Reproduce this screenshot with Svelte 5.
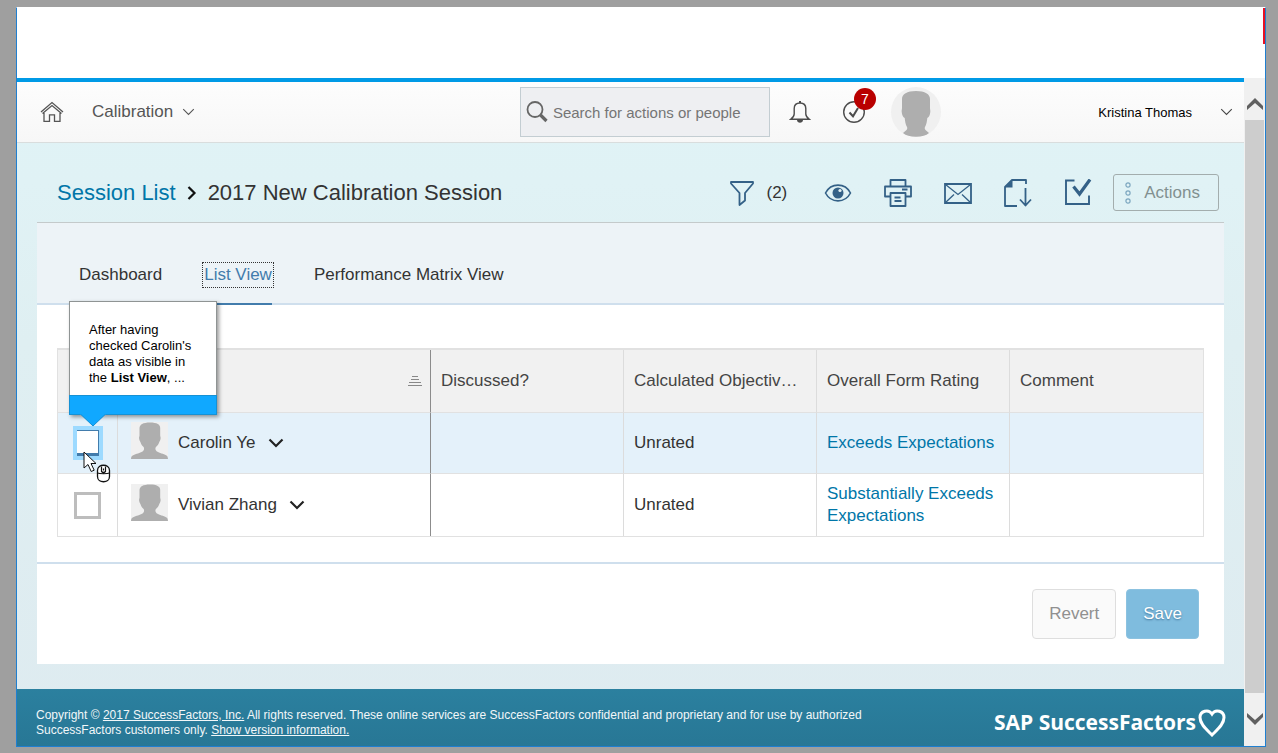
<script lang="ts">
  type Row = { id: string; name: string; objective: string; rating: string; active: boolean };

  const tabs = ["Dashboard", "List View", "Performance Matrix View"];
  let selectedTab = $state("List View");
  let search = $state("");

  const columns = ["Discussed?", "Calculated Objective Rating", "Overall Form Rating", "Comment"];

  const rows: Row[] = [
    { id: "carolin", name: "Carolin Ye", objective: "Unrated", rating: "Exceeds Expectations", active: true },
    { id: "vivian", name: "Vivian Zhang", objective: "Unrated", rating: "Substantially Exceeds Expectations", active: false },
  ];
</script>

{#snippet person()}
  <path
    d="M19 .5C12 .5 8.500 2.500 8.500 6.500v7c0 1-.6 1.500-.4 3 .3 2.500 1.200 3 1.500 4 .5 2 1.500 3 3 4.500.6.800.6 2 .2 3-.8 1.800-3.300 2.700-5.800 3.500-3.500 1-7 1.500-7 5.500h37c0-4-3-4.500-6.500-5.500-2.500-.8-5-1.700-5.800-3.500-.4-1-.4-2.200.2-3 1.500-1.500 2.700-2.500 3.200-4.500.3-1 1.200-1.500 1.500-4 .2-1.500-.4-2-.4-3v-7C29.500 2.500 26 .5 19 .5z"
    fill="#aeaeae"
  />
{/snippet}

{#snippet chevron(width: number, stroke: number)}
  <svg class="chevron" {width} height="10" viewBox="0 0 16 10" fill="none" stroke="currentColor" stroke-width={stroke}>
    <path d="M1.500 1.500 8 8l6.500-6.500" />
  </svg>
{/snippet}

<div class="window">
  <div class="blank"></div>
  <div class="body">
    <div class="page">
      <header>
        <nav class="left">
          <a class="home" href="#home" aria-label="Home">
            <svg width="24" height="22" viewBox="0 0 24 22" fill="none" stroke="#555" stroke-width="1.300">
              <path d="M1 11 12 1.500 23 11M2.500 12.500 12 4.500l9.500 8M4 12v8.300h5.500v-6.500h5v6.500H20V12" />
            </svg>
          </a>
          <button class="module">Calibration {@render chevron(13, 1.3)}</button>
        </nav>
        <div class="middle">
          <label class="search">
            <svg width="24" height="24" viewBox="0 0 24 24" fill="none" stroke="#666">
              <circle cx="10" cy="9.500" r="7.500" stroke-width="1.800" />
              <path d="m15.500 15 6 6" stroke-width="3.200" />
            </svg>
            <input type="text" aria-label="Search" placeholder="Search for actions or people" bind:value={search} />
          </label>
          <button class="bell" aria-label="Notifications">
            <svg width="22" height="24" viewBox="0 0 22 24" fill="none" stroke="#4c4c4c" stroke-width="1.400">
              <path d="M11 3C7.500 3 5.200 5.200 5.200 8.500V14c0 2-1.200 3.500-3.500 5.300h18.600c-2.300-1.800-3.500-3.300-3.500-5.300V8.500C16.800 5.200 14.500 3 11 3z" />
              <path d="M8 20c0 3.500 6 3.500 6 0zM10 1h2v2h-2z" fill="#4c4c4c" stroke="none" />
            </svg>
          </button>
          <button class="todo" aria-label="To-do">
            <svg width="24" height="24" viewBox="0 0 24 24" fill="none" stroke="#4c4c4c">
              <circle cx="12" cy="12" r="10.300" stroke-width="1.400" />
              <path d="m7.500 12.500 3.500 3.800 5-8.300" stroke-width="2" />
            </svg>
            <span class="badge">7</span>
          </button>
          <svg class="avatar" width="50" height="50" viewBox="0 0 50 50">
            <circle cx="25" cy="25" r="25" fill="#f0f0f0" />
            <path
              d="M25 4C16 4 11 7 11 12v9c0 1.500-.5 2-.3 4 .3 3.500 1.500 5 3 6 .3 3 .8 6.500 2.300 9 .5 1 .3 2-.5 3L12 46c3 2.500 7 3.800 13 3.800S35 48.500 38 46l-3.500-3c-.8-1-1-2-.5-3 1.500-2.500 2-6 2.300-9 1.500-1 2.700-2.500 3-6 .2-2-.3-2.500-.3-4v-9C39 7 34 4 25 4z"
              fill="#aeaeae"
            />
          </svg>
        </div>
        <button class="user">Kristina Thomas {@render chevron(13, 1.3)}</button>
      </header>

      <main>
        <div class="titlebar">
          <h1>
            <a href="#sessions">Session List</a>
            <svg width="10" height="16" viewBox="0 0 10 16" fill="none" stroke="#111" stroke-width="2.200">
              <path d="m1.500 2 6 6-6 6" />
            </svg>
            <span>2017 New Calibration Session</span>
          </h1>
          <div class="tools">
            <button class="filter" aria-label="Filter">
              <svg width="28" height="28" viewBox="0 0 28 28" fill="none" stroke="#346187" stroke-width="1.800">
                <path d="M3 3h22v1.500l-8 9.500v7.500L11.500 26V14L3 4.500z" stroke-linejoin="round" />
              </svg>
              <span>(2)</span>
            </button>
            <button class="tool" aria-label="Display options">
              <svg width="28" height="28" viewBox="0 0 28 28">
                <path d="M1.500 14C7 3.500 21 3.500 26.500 14 21 24.500 7 24.500 1.500 14z" fill="none" stroke="#346187" stroke-width="1.600" />
                <circle cx="14" cy="14" r="5.500" fill="#346187" />
                <circle cx="16" cy="11.500" r="1.600" fill="#e4f2f5" />
              </svg>
            </button>
            <button class="tool" aria-label="Print">
              <svg width="28" height="28" viewBox="0 0 28 28" fill="none" stroke="#346187" stroke-width="1.800">
                <path d="M6.500 7.500V1h15v6.500M6 17.500H1V7.500h26v10h-5M18 10.500h5.500M6.500 14h15v13h-15zM10.500 18.500h6M10.500 22h7" stroke-linejoin="round" />
              </svg>
            </button>
            <button class="tool" aria-label="Send mail">
              <svg width="28" height="28" viewBox="0 0 28 28" fill="none" stroke="#346187">
                <path d="M1 5h26v19H1z" stroke-width="1.800" />
                <path d="m1.500 5.500 12.500 10 12.500-10M1.500 23.500l8.500-8M26.500 23.500l-8.500-8" stroke-width="1.300" />
              </svg>
            </button>
            <button class="tool" aria-label="Export">
              <svg width="28" height="28" viewBox="0 0 28 28" fill="none" stroke="#346187" stroke-width="1.800">
                <path d="M13 27H1V8l7-7h14v4M21.500 9v18M16 20.500l5.500 6 5.500-6" stroke-linejoin="round" />
                <path d="M1 8.500h7.500V1z" fill="#346187" stroke="none" />
              </svg>
            </button>
            <button class="tool" aria-label="Finalize">
              <svg width="28" height="28" viewBox="0 0 28 28" fill="none" stroke="#346187">
                <path d="M10.500 1.500H2V25h23v-8.500" stroke-width="1.900" />
                <path d="m9.500 7.500 6 7.500L26 .5" stroke-width="3.200" />
              </svg>
            </button>
            <button class="actions">
              <svg width="8" height="22" viewBox="0 0 8 22" fill="none" stroke="#7da7c0" stroke-width="1.200">
                <circle cx="4" cy="3" r="2.100" /><circle cx="4" cy="11" r="2.100" /><circle cx="4" cy="19" r="2.100" />
              </svg>
              Actions
            </button>
          </div>
        </div>

        <div class="tabs" role="tablist">
          {#each tabs as tab}
            <button role="tab" aria-selected={tab == selectedTab} class:selected={tab == selectedTab} onclick={() => (selectedTab = tab)}>
              <span>{tab}</span>
            </button>
          {/each}
        </div>

        <section class="card">
          <div class="list">
            <table>
              <colgroup>
                <col class="col-check" />
                <col class="col-name" />
                <col span="4" />
              </colgroup>
              <thead>
                <tr>
                  <th class="check"></th>
                  <th class="name" aria-label="Name">
                    <svg class="sort" width="16" height="10" viewBox="0 0 16 10" stroke="#888">
                      <path d="M5 .5h6M4 3.500h8M2 6.500h12M1 9.500h14" />
                    </svg>
                  </th>
                  {#each columns as column}
                    <th>{column}</th>
                  {/each}
                </tr>
              </thead>
              <tbody>
                {#each rows as row (row.id)}
                  <tr class:active={row.active}>
                    <td class="check">
                      <input type="checkbox" aria-label={"Select " + row.name} />
                      {#if row.active}
                        <div class="callout">
                          <p>After having checked Carolin's data as visible in the <b>List View</b>, ...</p>
                          <div class="strip"></div>
                          <svg class="arrow" width="26" height="13" viewBox="0 0 26 13">
                            <path d="M0 0h26L13 12z" fill="#10a8ff" />
                            <path d="m1 .5 12 11.500L25 .5" fill="none" stroke="#1691d4" />
                          </svg>
                        </div>
                        <svg class="pointer" width="30" height="34" viewBox="0 0 30 34" stroke="#111">
                          <path d="M1 1v16l4-3.500 3.200 7 3-1.300-3.200-6.700h5z" fill="#fff" />
                          <path d="M14.500 19.500c0-7 12-7 12 0v6c0 7-12 7-12 0z" fill="#fff" stroke-width="1.300" />
                          <path d="M14.500 22c2 1 10 1 12 0M18.500 15.500v5q2 2 4 0v-5M20.500 17.500v2" fill="none" stroke-width="1.200" />
                        </svg>
                      {/if}
                    </td>
                    <td class="name">
                      <div class="employee">
                        <svg class="photo" width="37" height="37" viewBox="0 0 37 37">
                          <path d="M0 0h37v37H0z" fill="#f0f0f0" />
                          {@render person()}
                        </svg>
                        <button>{row.name} {@render chevron(16, 2.2)}</button>
                      </div>
                    </td>
                    <td></td>
                    <td>{row.objective}</td>
                    <td><a href={"#" + row.id}>{row.rating}</a></td>
                    <td></td>
                  </tr>
                {/each}
              </tbody>
            </table>
          </div>
          <div class="buttons">
            <button class="revert">Revert</button>
            <button class="save">Save</button>
          </div>
        </section>
      </main>

      <footer>
        <p>
          Copyright © <a href="#about">2017 SuccessFactors, Inc.</a> All rights reserved. These online services are
          SuccessFactors confidential and proprietary and for use by authorized SuccessFactors customers only.
          <a href="#version">Show version information.</a>
        </p>
        <div class="brand">
          SAP SuccessFactors
          <svg width="28" height="28" viewBox="0 0 28 28" fill="none" stroke="#fff" stroke-width="3">
            <path d="M14 26C9 21 2 15.500 2 8.500 2 2 10.500-.5 14 5c3.500-5.500 12-3 12 3.500C26 15.500 19 21 14 26z" />
          </svg>
        </div>
      </footer>
    </div>

    <div class="scrollbar">
      <button aria-label="Scroll up">
        <svg width="16" height="12" viewBox="0 0 16 12" fill="#606060"><path d="M8 0 0 8v4l8-7 8 7V8z" /></svg>
      </button>
      <div class="thumb"></div>
      <button class="down" aria-label="Scroll down">
        <svg width="16" height="12" viewBox="0 0 16 12" fill="#606060"><path d="M8 12 0 4V0l8 7 8-7v4z" /></svg>
      </button>
    </div>
  </div>
</div>

<style>
  :global(body) {
    background: #9f9f9f;
    font-family: "Liberation Sans", Arial, sans-serif;
    font-size: 17px;
    color: #333;
  }

  button {
    font: inherit;
    color: inherit;
    background: none;
    border: none;
    padding: 0;
    cursor: pointer;
  }

  svg {
    display: block;
    flex: none;
  }

  a {
    color: #0076a8;
    text-decoration: none;
  }

  .window {
    margin: 7px 12px 0 16px;
    border: 1px solid #1f7fd0;
    border-top-color: #fff;
    background: #fff;
  }

  .blank {
    height: 70px;
    background: linear-gradient(#e81123, #e81123) right top / 2px 36px no-repeat;
  }

  .body {
    display: flex;
  }

  .page {
    flex: 1;
    min-width: 0;
    border-top: 4px solid #009ae6;
    background: linear-gradient(#e0f3f6, #e0f2f5 100px, #dfeff2 260px, #deebf0);
  }

  header {
    display: flex;
    align-items: center;
    height: 60px;
    background: linear-gradient(#fdfdfd, #f7f7f7);
    border-bottom: 1px solid #d9dddd;
  }

  .left {
    flex: 23;
    display: flex;
    align-items: center;
    gap: 28px;
    padding-left: 23px;
    box-sizing: border-box;
  }

  .module {
    display: flex;
    align-items: center;
    gap: 9px;
    color: #555;
  }

  .middle {
    display: flex;
    align-items: center;
  }

  .search {
    display: flex;
    align-items: center;
    gap: 4px;
    width: 250px;
    height: 50px;
    padding: 0 4px;
    box-sizing: border-box;
    border: 1px solid #c3cdd2;
    background: #eeeff2;
  }

  .search input {
    flex: 1;
    min-width: 0;
    padding: 0;
    border: none;
    outline: none;
    background: none;
    font: inherit;
    font-size: 15px;
    color: #333;
  }

  .search input::placeholder {
    color: #757575;
    opacity: 1;
  }

  .bell {
    margin-left: 19px;
  }

  .todo {
    position: relative;
    margin-left: 31px;
  }

  .badge {
    position: absolute;
    left: 12px;
    top: -12px;
    width: 22px;
    height: 22px;
    border-radius: 50%;
    background: #b90000;
    color: #fff;
    font-size: 14px;
    line-height: 22px;
    text-align: center;
  }

  .avatar {
    margin-left: 25px;
  }

  .user {
    flex: 14;
    display: flex;
    align-items: center;
    justify-content: flex-end;
    gap: 28px;
    padding-right: 11px;
    box-sizing: border-box;
    font-size: 13px;
    color: #000;
  }

  .user .chevron {
    color: #444;
  }

  main {
    padding: 0 20px 26px;
  }

  .titlebar {
    display: flex;
    justify-content: space-between;
    align-items: center;
    height: 80px;
    padding: 20px 5px 0 20px;
    box-sizing: border-box;
    border-bottom: 1px solid #c4cacb;
  }

  h1 {
    display: flex;
    align-items: center;
    gap: 11px;
    margin: 0;
    font-size: 22px;
    font-weight: normal;
  }

  .tools {
    display: flex;
    align-items: center;
  }

  .filter {
    display: flex;
    align-items: center;
    gap: 10px;
    margin-right: 21px;
  }

  .tool {
    display: flex;
    justify-content: center;
    width: 60px;
  }

  .actions {
    display: flex;
    align-items: center;
    gap: 12px;
    height: 37px;
    margin-left: 5px;
    padding: 0 18px 0 10px;
    border: 1px solid #a3adad;
    border-radius: 3px;
    color: #829090;
  }

  .tabs {
    display: flex;
    gap: 42px;
    height: 82px;
    padding: 0 42px;
    box-sizing: border-box;
    border-bottom: 2px solid #cfdfed;
    background: #edf3f7;
  }

  .tabs button {
    padding-top: 24px;
    border-bottom: 2px solid transparent;
    margin-bottom: -2px;
  }

  .tabs span {
    display: block;
    padding: 1px 0;
  }

  .tabs .selected {
    color: #427cac;
    border-color: #427cac;
  }

  .tabs .selected span {
    outline: 1px dotted #333;
    outline-offset: 1px;
  }

  .card {
    background: #fff;
  }

  .list {
    padding: 43px 20px 25px;
    border-bottom: 2px solid #cfdfed;
  }

  table {
    width: 100%;
    table-layout: fixed;
    border-collapse: separate;
    border-spacing: 0;
    border: 1px solid #e1e1e1;
    border-top-width: 2px;
    box-sizing: border-box;
  }

  .col-check {
    width: 60px;
  }

  .col-name {
    width: 313px;
  }

  th,
  td {
    height: 60px;
    padding: 0 10px;
    border-right: 1px solid #dcdcdc;
    border-bottom: 1px solid #e1e1e1;
    text-align: left;
    line-height: 22px;
  }

  th {
    height: 62px;
    background: #f1f1f1;
    font-weight: normal;
    color: #444;
    overflow: hidden;
    text-overflow: ellipsis;
    white-space: nowrap;
  }

  th:last-child,
  td:last-child {
    border-right: none;
  }

  tr:last-child td {
    height: 62px;
    border-bottom: none;
  }

  .name {
    border-right-color: #8c8c8c;
  }

  .sort {
    margin-left: auto;
    margin-right: -3px;
  }

  .active td {
    background: #e4f1fa;
  }

  .check {
    position: relative;
    padding: 0;
    text-align: center;
    overflow: visible;
  }

  input[type="checkbox"] {
    appearance: none;
    display: block;
    width: 27px;
    height: 27px;
    margin: 0 auto;
    border: 3px solid #bdbdbd;
    background: #fff;
  }

  .active input[type="checkbox"] {
    width: 22px;
    height: 26px;
    border: 1px solid #427cac;
    border-width: 1px 1px 3px 0;
    box-shadow: 0 0 0 4px #9ddaff;
  }

  .employee {
    display: flex;
    align-items: center;
    gap: 10px;
    padding-left: 3px;
  }

  .photo {
    margin-bottom: 5px;
  }

  .employee button {
    display: flex;
    align-items: center;
    gap: 12px;
  }

  .employee .chevron {
    color: #222;
  }

  .callout {
    position: absolute;
    z-index: 1;
    left: 11px;
    bottom: 58px;
    width: 148px;
    box-sizing: border-box;
    border: 1px solid #8f9494;
    background: #fff;
    box-shadow: 2px 2px 4px rgba(0, 0, 0, 0.4);
    color: #000;
    font-size: 13px;
    line-height: 16px;
    text-align: left;
  }

  .callout p {
    margin: 0;
    padding: 20px 18px 9px 19px;
  }

  .strip {
    height: 18px;
    margin: 0 -1px -1px;
    border: 1px solid #1691d4;
    background: #10a8ff;
  }

  .arrow {
    position: absolute;
    left: 10px;
    top: 100%;
  }

  .pointer {
    position: absolute;
    z-index: 2;
    left: 25px;
    top: 38px;
  }

  .buttons {
    display: flex;
    justify-content: flex-end;
    gap: 10px;
    padding: 25px 25px 25px;
  }

  .buttons button {
    height: 50px;
    padding: 0 16px;
    border: 1px solid #dedede;
    border-radius: 4px;
  }

  .revert {
    background: #fafafa;
    color: #909090;
  }

  .buttons .save {
    border-color: #8cc2e0;
    background: #7fbcde;
    color: #fff;
    text-shadow: 0 1px 2px rgba(0, 50, 90, 0.5);
  }

  main {
    padding-bottom: 25px;
  }

  footer {
    display: flex;
    align-items: center;
    justify-content: space-between;
    height: 57px;
    padding: 10px 18px 0 19px;
    box-sizing: border-box;
    background: linear-gradient(#2b809f, #287795);
    color: #f2f7f9;
    font-size: 12px;
    line-height: 15px;
  }

  footer p {
    max-width: 890px;
    margin: 0;
  }

  footer a {
    color: inherit;
    text-decoration: underline;
  }

  .brand {
    display: flex;
    align-items: center;
    gap: 2px;
    color: #fff;
    font-family: "Open Sans", sans-serif;
    font-size: 21px;
    font-weight: bold;
    white-space: nowrap;
  }

  .scrollbar {
    display: flex;
    flex-direction: column;
    width: 21px;
    background: #f0f0f0;
  }

  .scrollbar button {
    display: flex;
    justify-content: center;
    height: 42px;
    padding-top: 20px;
    box-sizing: border-box;
  }

  .scrollbar .down {
    height: 53px;
  }

  .thumb {
    flex: 1;
    margin: 0 1px;
    background: #cdcdcd;
  }
</style>
